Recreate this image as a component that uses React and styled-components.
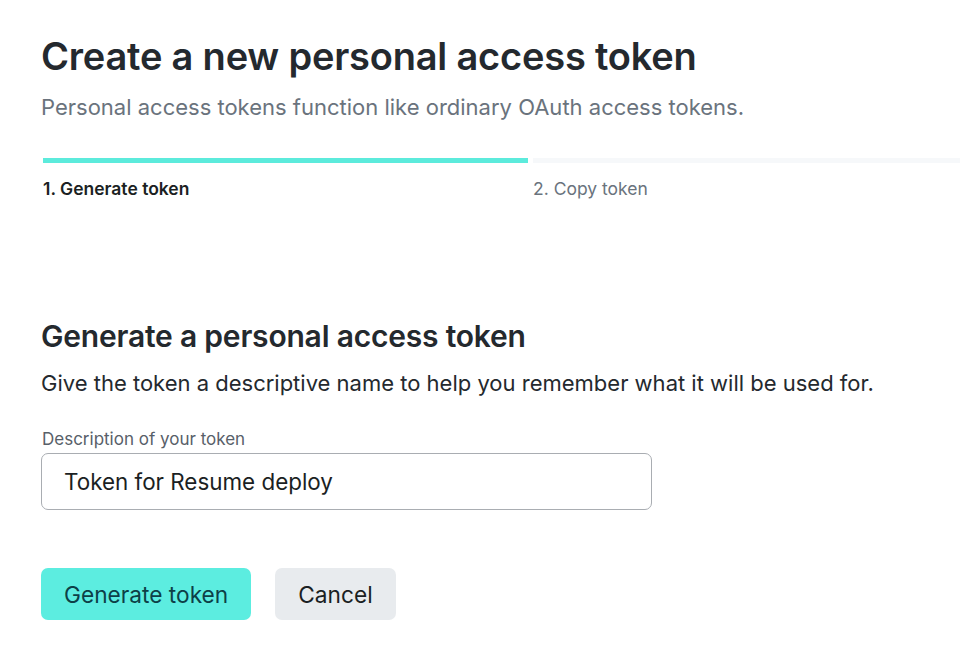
import React from 'react'
import styled, { createGlobalStyle } from 'styled-components'

const Global = createGlobalStyle`
  body {
    margin: 0;
    background: #fff;
    font-family: Inter, "Noto Sans", sans-serif;
    color: #24292e;
  }
`

const Page = styled.div`
  padding: 30px 0 0 41px;
  width: 960px;
  height: 657px;
  box-sizing: border-box;
  overflow: hidden;
`

const Title = styled.h1`
  margin: 0;
  font-size: 38px;
  font-weight: 600;
  letter-spacing: -0.2px;
  line-height: 52px;
  color: #24292e;
`

const Lead = styled.p`
  margin: 10px 0 0;
  font-size: 22px;
  line-height: 30px;
  color: #6a737d;
`

const Steps = styled.div`
  display: grid;
  grid-template-columns: 485px 1fr;
  column-gap: 5px;
  margin: 36px 0 0 2px;
`

const Bar = styled.div`
  height: 5px;
  background: ${p => (p.$done ? '#5cebdc' : '#f6f8fa')};
`

const StepLabel = styled.div`
  margin-top: 15px;
  font-size: 17.5px;
  line-height: 22px;
  font-weight: ${p => (p.$active ? 600 : 400)};
  color: ${p => (p.$active ? '#1b1f23' : '#6a737d')};
`

const Section = styled.section`
  margin-top: 116px;
`

const Heading = styled.h2`
  margin: 0;
  font-size: 30px;
  font-weight: 600;
  line-height: 40px;
  letter-spacing: -0.2px;
  color: #24292e;
`

const Desc = styled.p`
  margin: 12px 0 0;
  font-size: 22px;
  line-height: 30px;
  color: #24292e;
`

const Field = styled.label`
  display: flex;
  flex-direction: column;
  gap: 4px;
  margin-top: 31px;
  width: 611px;
`

const FieldLabel = styled.span`
  font-size: 17px;
  line-height: 20px;
  color: #586069;
  padding-left: 1px;
`

const Input = styled.input`
  box-sizing: border-box;
  height: 57px;
  width: 100%;
  padding: 0 22px;
  border: 1px solid #a9adb2;
  border-radius: 7px;
  font-family: inherit;
  font-size: 22.4px;
  color: #1b1f23;
  background: #fff;
  outline: none;
`

const Actions = styled.div`
  display: flex;
  gap: 24px;
  margin-top: 58px;
`

const Button = styled.button`
  height: 52px;
  padding: 0 23px;
  border: none;
  border-radius: 7px;
  font-family: inherit;
  font-size: 22.7px;
  background: ${p => (p.$primary ? '#5cede0' : '#e8ebee')};
  color: ${p => (p.$primary ? '#0d3f47' : '#1b1f23')};
  cursor: pointer;
`

export default function App() {
  return (
    <Page>
      <Global />
      <Title>Create a new personal access token</Title>
      <Lead>Personal access tokens function like ordinary OAuth access tokens.</Lead>
      <Steps>
        <Bar $done />
        <Bar />
        <StepLabel $active>1. Generate token</StepLabel>
        <StepLabel>2. Copy token</StepLabel>
      </Steps>
      <Section>
        <Heading>Generate a personal access token</Heading>
        <Desc>Give the token a descriptive name to help you remember what it will be used for.</Desc>
        <Field>
          <FieldLabel>Description of your token</FieldLabel>
          <Input defaultValue="Token for Resume deploy" />
        </Field>
        <Actions>
          <Button $primary>Generate token</Button>
          <Button>Cancel</Button>
        </Actions>
      </Section>
    </Page>
  )
}
